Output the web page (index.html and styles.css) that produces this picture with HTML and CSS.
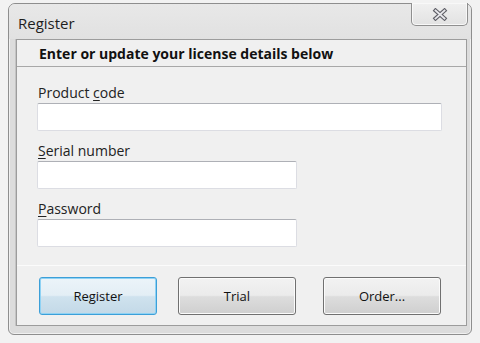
FILE: index.html
```html
<!DOCTYPE html>
<html lang="en">
    <head>
        <meta charset="UTF-8" />
        <title>Register</title>
        <link rel="stylesheet" href="styles.css">
    </head>
    <body>
        <div class="window">
            <div class="titlebar">
                <span class="title">Register</span>
                <button class="close" type="button" aria-label="Close">
                    <svg width="18" height="13" viewBox="0 0 18 13">
                        <path d="M4.5 2.5 L13.5 10.5 M13.5 2.5 L4.5 10.5" stroke="#5e5e66" stroke-width="4" stroke-linecap="square" fill="none" />
                        <path d="M4.5 2.5 L13.5 10.5 M13.5 2.5 L4.5 10.5" stroke="#e8e8ec" stroke-width="1.8" stroke-linecap="square" fill="none" />
                    </svg>
                </button>
            </div>

            <div class="client">
                <div class="header">Enter or update your license details below</div>

                <div class="form">
                    <label class="field">
                        <span class="label">Product <u>c</u>ode</span>
                        <input class="box wide" type="text" />
                    </label>
                    <label class="field">
                        <span class="label"><u>S</u>erial number</span>
                        <input class="box" type="text" />
                    </label>
                    <label class="field">
                        <span class="label"><u>P</u>assword</span>
                        <input class="box" type="password" />
                    </label>
                </div>

                <div class="buttons">
                    <button class="btn default" type="button">Register</button>
                    <button class="btn" type="button">Trial</button>
                    <button class="btn" type="button">Order...</button>
                </div>
            </div>
        </div>
    </body>
</html>
```

FILE: styles.css
```css
html, body {
    margin: 0;
    height: 100%;
}

body {
    background: #f2f2f2;
    font-family: 'Open Sans', 'Noto Sans', sans-serif;
    color: #1a1a1a;
    padding: 3px 0 0 8px;
    box-sizing: border-box;
}

.window {
    width: 464px;
    height: 332px;
    box-sizing: border-box;
    border: 1px solid #8e8e8e;
    border-radius: 7px 7px 6px 6px;
    background: #dcdcdc;
    box-shadow: inset 0 0 0 1px #f0f0f0;
    display: flex;
    flex-direction: column;
    padding: 0 4px 8px 7px;
}

.titlebar {
    height: 35px;
    display: flex;
    justify-content: space-between;
    align-items: flex-start;
    background: linear-gradient(#e8e8e8, #e1e1e1);
    margin: 0 -4px 0 -7px;
    padding: 0 3px 0 9px;
    border-radius: 6px 6px 0 0;
}

.title {
    font-size: 15px;
    line-height: 18px;
    margin-top: 10px;
    color: #1e1e1e;
}

.close {
    width: 57px;
    height: 23px;
    padding: 0;
    margin-top: -1px;
    border: 1px solid #8f8f8f;
    border-top: none;
    border-radius: 0 0 5px 5px;
    background: linear-gradient(#f0f0f0, #e2e2e2);
    box-shadow: inset 0 0 0 1px #f8f8f8;
    display: flex;
    align-items: center;
    justify-content: center;
}

.close svg {
    display: block;
}

.client {
    flex: 1;
    border: 1px solid #9c9c9c;
    box-shadow: -1px 0 0 #c4c4c4;
    background: #f0f0f0;
    display: flex;
    flex-direction: column;
}

.header {
    height: 26px;
    border-bottom: 1px solid #a8a8a8;
    padding-left: 22px;
    font-size: 14px;
    font-weight: 700;
    line-height: 28px;
    color: #111;
}

.form {
    flex: 1;
    display: flex;
    flex-direction: column;
    gap: 11px;
    padding: 17px 0 0 20px;
    border-bottom: 1px solid #fbfbfb;
}

.field {
    display: flex;
    flex-direction: column;
    align-items: flex-start;
}

.label {
    font-size: 14px;
    line-height: 18px;
    padding-left: 1px;
    color: #222;
}

.label u {
    text-decoration-thickness: 1px;
    text-underline-offset: 2px;
}

.box {
    margin: 1px 0 0;
    width: 260px;
    height: 28px;
    box-sizing: border-box;
    border: 1px solid #dcdde3;
    border-top-color: #aeb0b6;
    border-radius: 2px;
    background: #fff;
}

.box.wide {
    width: 405px;
}

.buttons {
    height: 59px;
    display: flex;
    align-items: flex-start;
    padding: 11px 0 0 22px;
    gap: 21px;
    box-sizing: border-box;
}

.btn {
    width: 118px;
    height: 38px;
    border: 1px solid #707070;
    border-radius: 3px;
    background: linear-gradient(#f2f2f2 0%, #ebebeb 48%, #dddddd 52%, #cfcfcf 100%);
    box-shadow: inset 0 0 0 1px #fbfbfb;
    font-family: 'Open Sans', 'Noto Sans', sans-serif;
    font-size: 13px;
    color: #111;
    padding: 0;
}

.btn.default {
    border-color: #3c9fd8;
    background: linear-gradient(#ecf4f9 0%, #e3eef5 48%, #cfe2ee 52%, #c3d9e7 100%);
    box-shadow: inset 0 0 0 1px #8fd2f4;
}

.buttons .btn:nth-child(3) {
    margin-left: 6px;
}
```
